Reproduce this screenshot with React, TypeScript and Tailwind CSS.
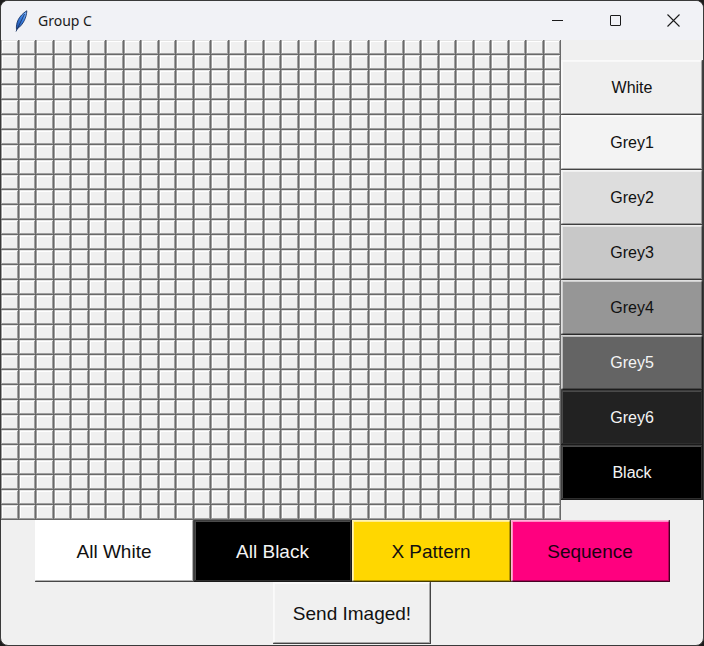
import React from "react";

const CELL =
  "bg-[#f0f0f0] shadow-[inset_-1px_-1px_0_#696969,inset_1px_0_0_#a0a0a0,inset_0_1px_0_#e3e3e3,inset_-2px_-2px_0_#a0a0a0,inset_2px_2px_0_#ffffff]";

const BTN =
  "flex items-center justify-center shadow-[inset_-1px_-1px_0_rgba(0,0,0,0.6),inset_1px_1px_0_rgba(255,255,255,0.35),inset_-2px_-2px_0_rgba(0,0,0,0.3),inset_2px_2px_0_rgba(255,255,255,0.55)]";

const DARKBTN =
  "flex items-center justify-center shadow-[inset_-1px_-1px_0_#1a1a1a,inset_1px_1px_0_#3c3c3c,inset_-2px_-2px_0_#2e2e2e,inset_2px_2px_0_#4a4a4a]";

const side: { label: string; cls: string; dark?: boolean }[] = [
  { label: "White", cls: "bg-[#efefef] text-[#111111]" },
  { label: "Grey1", cls: "bg-[#f3f3f3] text-[#111111]" },
  { label: "Grey2", cls: "bg-[#dddddd] text-[#111111]" },
  { label: "Grey3", cls: "bg-[#c8c8c8] text-[#111111]" },
  { label: "Grey4", cls: "bg-[#969696] text-[#111111]" },
  { label: "Grey5", cls: "bg-[#646464] text-[#f4f4f4]" },
  { label: "Grey6", cls: "bg-[#222222] text-[#f4f4f4]", dark: true },
  { label: "Black", cls: "bg-[#000000] text-[#f4f4f4]", dark: true },
];

function Feather() {
  return (
    <svg width="14" height="22" viewBox="0 0 14 22">
      <defs>
        <linearGradient id="fg" x1="0" y1="1" x2="1" y2="0">
          <stop offset="0" stopColor="#1f4fa8" />
          <stop offset="0.6" stopColor="#3f86e8" />
          <stop offset="1" stopColor="#8fc0ff" />
        </linearGradient>
      </defs>
      <path
        d="M2.5 19.5 C1.8 13 4.5 6 12.8 0.8 C12.6 7.5 9.2 14.5 3.6 18.6 Z"
        fill="url(#fg)"
        stroke="#1b3566"
        strokeWidth="0.9"
      />
      <path d="M2 21.5 L10.5 4" stroke="#1b3566" strokeWidth="0.9" fill="none" />
    </svg>
  );
}

export default function App() {
  const cells = Array.from({ length: 32 * 32 });
  return (
    <div className="w-[704px] h-[646px] bg-[#1c1c1c]">
      <div className="w-[704px] h-[646px] flex flex-col overflow-hidden rounded-[8px] border border-[#3a3a3a] bg-[#f0f0f0] font-['Liberation_Sans',Arial,sans-serif]">
        {/* title bar */}
        <div className="h-[39px] shrink-0 flex items-center bg-[#f1f2f6]">
          <div className="ml-[13px] mt-[1px] flex items-center">
            <Feather />
          </div>
          <span className="ml-[10px] text-[14px] text-[#1b1b1b] font-['Noto_Sans',sans-serif]">
            Group C
          </span>
          <div className="ml-auto flex items-center h-full">
            <div className="w-[58px] h-full flex items-center justify-center">
              <div className="w-[11px] h-[1px] bg-[#1b1b1b]" />
            </div>
            <div className="w-[58px] h-full flex items-center justify-center">
              <div className="w-[11px] h-[11px] border border-[#1b1b1b] rounded-[1px]" />
            </div>
            <div className="w-[58px] h-full flex items-center justify-center mr-[1px]">
              <svg width="13" height="13" viewBox="0 0 13 13">
                <path d="M0.5 0.5 L12.5 12.5 M12.5 0.5 L0.5 12.5" stroke="#1b1b1b" strokeWidth="1.1" />
              </svg>
            </div>
          </div>
        </div>

        {/* main area */}
        <div className="flex shrink-0">
          <div className="grid grid-cols-[repeat(16,18px_17px)] grid-rows-[repeat(32,15px)] w-[560px] h-[480px]">
            {cells.map((_, i) => (
              <div key={i} className={CELL} />
            ))}
          </div>
          <div className="w-[142px] h-[480px] flex flex-col pt-[20px]">
            {side.map((s) => (
              <div
                key={s.label}
                className={`${s.dark ? DARKBTN : BTN} ${s.cls} h-[55px] text-[16px] pt-[1px]`}
              >
                {s.label}
              </div>
            ))}
          </div>
        </div>

        {/* bottom row */}
        <div className="flex justify-center shrink-0">
          <div className={`${BTN} w-[159px] h-[62px] pt-[2px] bg-white text-[#111111] text-[19px]`}>All White</div>
          <div className={`${DARKBTN} w-[158px] h-[62px] pt-[2px] bg-black text-[#f4f4f4] text-[19px]`}>All Black</div>
          <div className={`${BTN} w-[159px] h-[62px] pt-[2px] bg-[#ffd700] text-[#111111] text-[19px]`}>X Pattern</div>
          <div className={`${BTN} w-[159px] h-[62px] pt-[2px] bg-[#ff007f] text-[#1a0010] text-[19px]`}>Sequence</div>
        </div>
        <div className="flex justify-center shrink-0">
          <div className={`${BTN} w-[158px] h-[62px] pt-[2px] bg-[#f0f0f0] text-[#111111] text-[19px]`}>Send Imaged!</div>
        </div>
      </div>
    </div>
  );
}
